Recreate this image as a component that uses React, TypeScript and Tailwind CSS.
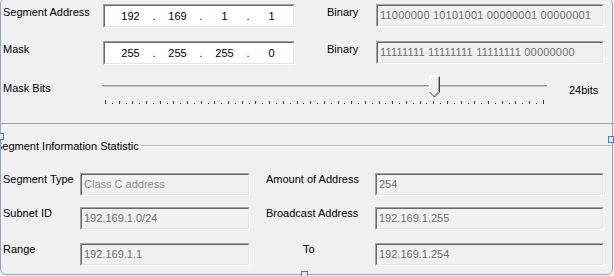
import React from 'react';

type BoxProps = { className?: string; children?: React.ReactNode };

// classic sunken 3D edit box
const Sunken = ({ className = '', children }: BoxProps) => (
  <div
    className={`border border-t-[#a0a0a0] border-l-[#a0a0a0] border-r-white border-b-white ${className}`}
  >
    <div className="flex h-full items-center border border-t-[#696969] border-l-[#696969] border-r-[#e3e3e3] border-b-[#e3e3e3]">
      {children}
    </div>
  </div>
);

const IpBox = ({ parts }: { parts: string[] }) => (
  <Sunken className="h-[24px] w-[192px] bg-white">
    <div className="flex pl-[5px] text-black">
      {parts.map((p, i) => (
        <React.Fragment key={i}>
          {i > 0 && <span className="w-[6px] text-center">.</span>}
          <span className="w-[41px] text-center">{p}</span>
        </React.Fragment>
      ))}
    </div>
  </Sunken>
);

const ReadBox = ({ value, width, light }: { value: string; width: string; light?: boolean }) => (
  <Sunken className={`h-[23px] ${width}`}>
    <span className={`pl-[2px] ${light ? 'text-[#8c8c8c]' : 'text-[#6d6d6d]'}`}>{value}</span>
  </Sunken>
);

const AddressRow = ({ label, parts, binary }: { label: string; parts: string[]; binary: string }) => (
  <div className="flex items-start">
    <div className="mt-[2px] w-[100px]">{label}</div>
    <IpBox parts={parts} />
    <div className="ml-[32px] mt-[2px] w-[49px]">Binary</div>
    <Sunken className="h-[23px] w-[228px]">
      <span className="pl-[2px] tracking-[0.2px] text-[#6d6d6d]">{binary}</span>
    </Sunken>
  </div>
);

const StatRow = ({
  l1,
  v1,
  l2,
  v2,
  light,
  indent,
}: {
  l1: string;
  v1: string;
  l2: string;
  v2: string;
  light?: boolean;
  indent?: boolean;
}) => (
  <div className="flex items-start pl-[3px]">
    <div className="w-[77px]">{l1}</div>
    <ReadBox value={v1} width="w-[170px]" light={light} />
    <div className={`ml-[16px] w-[109px] ${indent ? 'pl-[37px]' : ''}`}>{l2}</div>
    <ReadBox value={v2} width="w-[229px]" />
  </div>
);

const MaskSlider = () => {
  const ticks = Array.from({ length: 65 }, (_, i) => i);
  return (
    <svg width="460" height="34" className="block">
      <rect x="2" y="12" width="445" height="1" fill="#9a9a9a" />
      <rect x="2" y="13" width="445" height="1" fill="#c4c4c4" />
      {ticks.map((i) => {
        const x = Math.round(5 + i * 6.84) + 0.5;
        const tall = i === 0 || i === 64;
        const y1 = tall ? 27 : i % 2 === 0 ? 28 : 30;
        return (
          <line key={i} x1={x} x2={x} y1={y1} y2={31} stroke="#3a3a3a" strokeWidth="1" />
        );
      })}
      <polygon points="329.5,3.5 339.5,3.5 339.5,19 334.5,24 329.5,19" fill="#f0f0f0" />
      <path d="M329.5 19 V3.5 H339" fill="none" stroke="#ffffff" strokeWidth="1" />
      <path d="M338.5 4.5 V18.6 L334.5 22.6" fill="none" stroke="#a0a0a0" strokeWidth="1" />
      <path d="M339.5 3.5 V19 L334.5 24 L329.5 19" fill="none" stroke="#404040" strokeWidth="1" />
    </svg>
  );
};

export default function App() {
  return (
    <div className="relative h-[276px] w-[614px] overflow-hidden bg-[#f0f0f0] font-['Liberation_Sans',Arial,sans-serif] text-[11px] leading-[13px] text-black">
      <div className="h-[124px] border-b border-[#a0a0a0] pl-[3px] pt-[4px]">
        <AddressRow
          label="Segment Address"
          parts={['192', '169', '1', '1']}
          binary="11000000 10101001 00000001 00000001"
        />
        <div className="mt-[13px]">
          <AddressRow
            label="Mask"
            parts={['255', '255', '255', '0']}
            binary="11111111 11111111 11111111 00000000"
          />
        </div>
        <div className="mt-[8px] flex items-start">
          <div className="mt-[9px] w-[97px]">Mask Bits</div>
          <MaskSlider />
          <div className="ml-[9px] mt-[11px]">24bits</div>
        </div>
      </div>

      <div className="mt-[15px] flex h-[14px] items-center pr-[2px]">
        <span className="ml-[-5px] whitespace-nowrap">Segment Information Statistic</span>
        <div className="ml-[2px] flex-1 border-t border-b border-t-[#b4b4b4] border-b-white" />
      </div>

      <div className="mt-[20px] flex flex-col">
        <StatRow l1="Segment Type" v1="Class C address" l2="Amount of Address" v2="254" light />
        <div className="mt-[11px]">
          <StatRow l1="Subnet ID" v1="192.169.1.0/24" l2="Broadcast Address" v2="192.169.1.255" />
        </div>
        <div className="mt-[13px]">
          <StatRow l1="Range" v1="192.169.1.1" l2="To" v2="192.169.1.254" indent />
        </div>
      </div>

      {/* designer selection frame and grab handles */}
      <div className="pointer-events-none absolute left-0 top-[-2px] h-[277px] w-[613px] rounded-[6px] border border-[#8fa8c4]" />
      <div className="absolute left-[-2px] top-[133px] h-[7px] w-[6px] border border-[#5a7ea8] bg-[#dbe8f6]" />
      <div className="absolute left-[608px] top-[136px] h-[7px] w-[6px] border border-[#5a7ea8] bg-[#dbe8f6]" />
      <div className="absolute left-[301px] top-[271px] h-[7px] w-[7px] border border-[#5a7ea8] bg-[#dbe8f6]" />
    </div>
  );
}
